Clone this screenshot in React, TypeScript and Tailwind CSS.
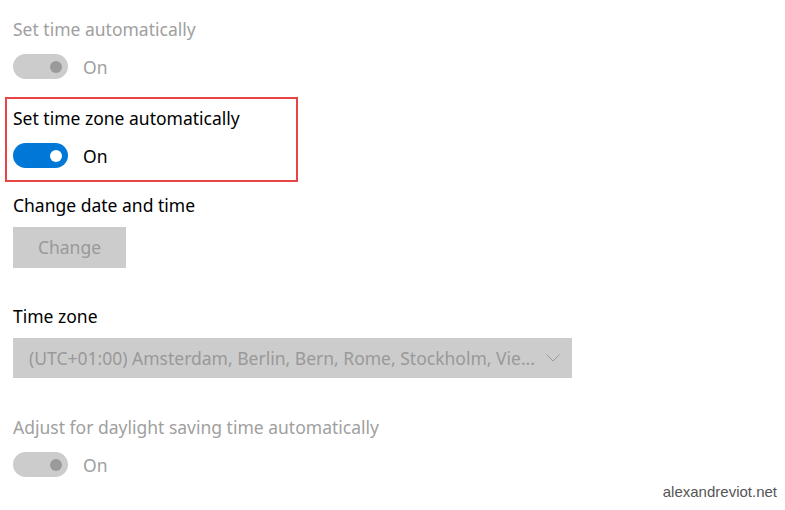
import React from "react";

const font = { fontFamily: '"Noto Sans", "Open Sans", sans-serif' };

function Toggle({ on }: { on: boolean }) {
  return (
    <div className="flex items-center h-[25px]">
      <div
        className={`w-[55px] h-[25px] rounded-full flex items-center justify-end pr-[6px] ${on ? "bg-[#0078d7]" : "bg-[#cccccc]"}`}
      >
        <div className={`w-[12px] h-[12px] rounded-full ${on ? "bg-white" : "bg-[#9a9a9a]"}`} />
      </div>
      <span className={`ml-[15px] text-[17.5px] leading-[24px] ${on ? "text-black" : "text-[#a0a0a0]"}`}>On</span>
    </div>
  );
}

export default function App() {
  return (
    <div className="w-[785px] h-[510px] bg-white relative overflow-hidden" style={font}>
      <div className="flex flex-col pl-[13px] pt-[17px]">
        <div className="h-[24px] leading-[24px] text-[17.5px] text-[#a0a0a0]">Set time automatically</div>
        <div className="mt-[13px]">
          <Toggle on={false} />
        </div>
        <div className="mt-[18px] ml-[-8px] w-[293px] border-2 border-[#e84444] pl-[6px] pt-[7px] pb-[12px]">
          <div className="h-[24px] leading-[24px] text-[17.5px] text-black">Set time zone automatically</div>
          <div className="mt-[13px]">
            <Toggle on={true} />
          </div>
        </div>
        <div className="mt-[11px] h-[24px] leading-[24px] text-[17.5px] text-black">Change date and time</div>
        <div className="mt-[10px] w-[113px] h-[41px] bg-[#cccccc] flex items-center justify-center text-[17.5px] text-[#999999]">
          Change
        </div>
        <div className="mt-[36px] h-[24px] leading-[24px] text-[17.5px] text-black">Time zone</div>
        <div className="mt-[10px] w-[559px] h-[40px] bg-[#cccccc] flex items-center pl-[16px] pr-[12px] text-[17.5px] text-[#999999]">
          <span className="flex-1 whitespace-nowrap">(UTC+01:00) Amsterdam, Berlin, Bern, Rome, Stockholm, Vie...</span>
          <svg width="14" height="8" viewBox="0 0 14 8" className="ml-2">
            <polyline points="0.5,0.5 7,7 13.5,0.5" fill="none" stroke="#9a9a9a" strokeWidth="1" />
          </svg>
        </div>
        <div className="mt-[37px] h-[24px] leading-[24px] text-[17.5px] text-[#a0a0a0]">Adjust for daylight saving time automatically</div>
        <div className="mt-[13px]">
          <Toggle on={false} />
        </div>
      </div>
      <div
        className="absolute right-[8px] bottom-[7px] text-[15px] text-[#555555]"
        style={{ fontFamily: '"Liberation Sans", Arial, sans-serif' }}
      >
        alexandreviot.net
      </div>
    </div>
  );
}
